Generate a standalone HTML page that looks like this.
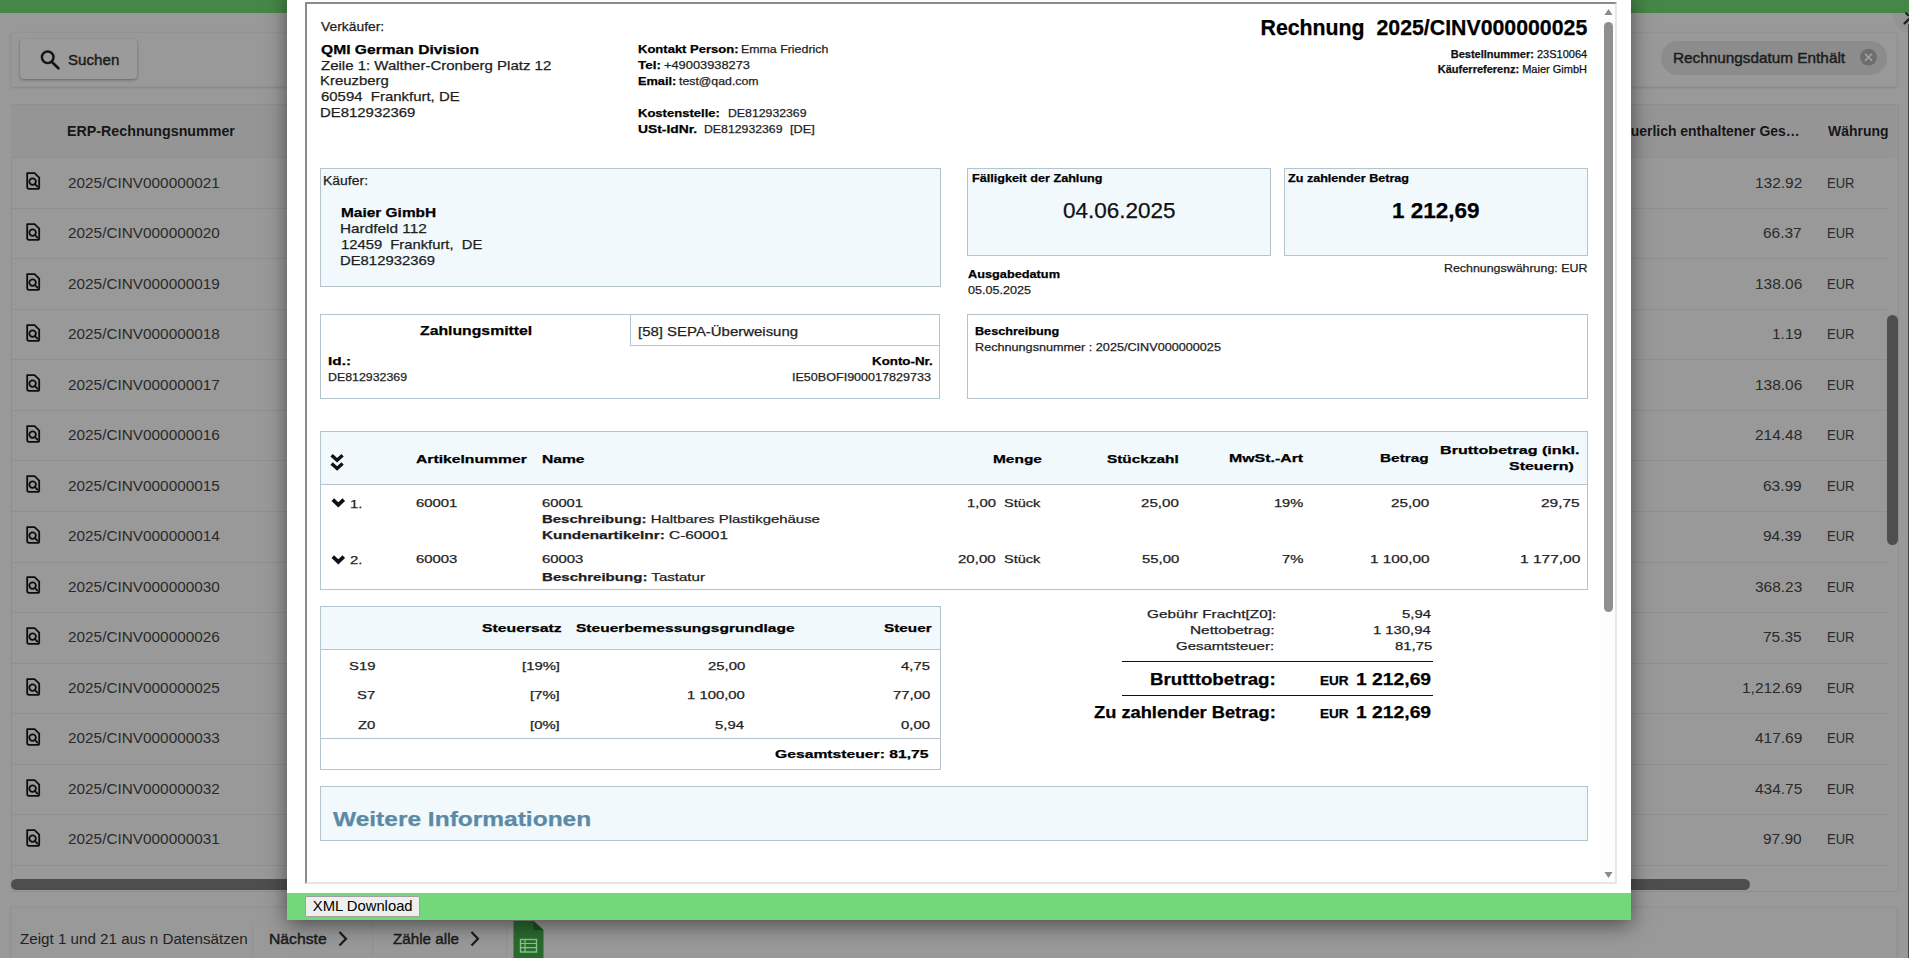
<!DOCTYPE html>
<html><head><meta charset="utf-8"><style>
*{box-sizing:border-box}
html,body{margin:0;padding:0}
body{width:1909px;height:958px;overflow:hidden;position:relative;background:#999;font-family:"Liberation Sans",sans-serif}
.t{position:absolute;white-space:pre;line-height:1;transform-origin:0 0}
.t b{font-weight:bold}
.inv .t{-webkit-text-stroke:0.25px currentColor}
.a{position:absolute}
.rl{position:absolute;left:11px;width:1877px;height:1px;background:#8f8f8f}
.ri{position:absolute;left:24.5px}
.box{position:absolute;border:1px solid #b3c4cc;background:#f1f9fd}
.wbox{position:absolute;border:1px solid #b3c4cc;background:#fff}
.hl{position:absolute;height:1px;background:#b3c4cc}
</style></head><body>
<!-- background page -->
<div class="a" style="left:0;top:0;width:1909px;height:13px;background:#468748"></div>
<div class="a" style="left:10.5px;top:31.5px;width:1886px;height:55px;border:1px solid #939393;box-shadow:0 1px 2px rgba(0,0,0,0.12)"></div>
<div class="a" style="left:19.8px;top:39.3px;width:117px;height:39.7px;border-radius:4px;background:#9b9b9b;box-shadow:0 1px 3px rgba(0,0,0,0.35)"></div>
<svg class="a" style="left:38px;top:48px" width="24" height="24" viewBox="0 0 24 24"><circle cx="9.7" cy="9.3" r="5.8" fill="none" stroke="#141414" stroke-width="2.4"/><path d="M14.2 14.2 L20.4 20.3" stroke="#141414" stroke-width="2.6" stroke-linecap="round"/></svg>
<div class="a" style="left:1661px;top:40.5px;width:225.5px;height:34.5px;border-radius:17.25px;background:#8c8c8c"></div>
<svg class="a" style="left:1858px;top:46.5px" width="21" height="21" viewBox="0 0 21 21"><circle cx="10.5" cy="10.2" r="8.4" fill="#6e6e6e"/><path d="M7 6.7 L14 13.7 M14 6.7 L7 13.7" stroke="#a4a4a4" stroke-width="1.6"/></svg>
<div class="a" style="left:1893px;top:13px;width:40px;height:22px;border-radius:0 0 0 22px;background:#939393"></div>
<div class="a" style="left:10.5px;top:103.5px;width:1888px;height:788px;border:1px solid #8f8f8f"></div>
<div class="a" style="left:11px;top:104.5px;width:1887px;height:52.6px;background:#959596"></div>
<div class="rl" style="top:157.10px"></div>
<div class="rl" style="top:207.65px"></div>
<div class="rl" style="top:258.20px"></div>
<div class="rl" style="top:308.75px"></div>
<div class="rl" style="top:359.30px"></div>
<div class="rl" style="top:409.85px"></div>
<div class="rl" style="top:460.40px"></div>
<div class="rl" style="top:510.95px"></div>
<div class="rl" style="top:561.50px"></div>
<div class="rl" style="top:612.05px"></div>
<div class="rl" style="top:662.60px"></div>
<div class="rl" style="top:713.15px"></div>
<div class="rl" style="top:763.70px"></div>
<div class="rl" style="top:814.25px"></div>
<div class="rl" style="top:864.80px"></div>
<svg class="ri" style="top:172.30px" width="16" height="18" viewBox="0 0 16 18"><path d="M2.2 1.1 H9.6 L14.2 5.6 V15.2 Q14.2 16.9 12.5 16.9 H3.9 Q2.2 16.9 2.2 15.2 Z" fill="none" stroke="#0d0d0d" stroke-width="1.8" stroke-linejoin="round"/><circle cx="7.6" cy="9.6" r="3.3" fill="none" stroke="#0d0d0d" stroke-width="1.8"/><path d="M10 12 L12.4 14.6" stroke="#0d0d0d" stroke-width="1.8" stroke-linecap="round"/></svg>
<svg class="ri" style="top:222.82px" width="16" height="18" viewBox="0 0 16 18"><path d="M2.2 1.1 H9.6 L14.2 5.6 V15.2 Q14.2 16.9 12.5 16.9 H3.9 Q2.2 16.9 2.2 15.2 Z" fill="none" stroke="#0d0d0d" stroke-width="1.8" stroke-linejoin="round"/><circle cx="7.6" cy="9.6" r="3.3" fill="none" stroke="#0d0d0d" stroke-width="1.8"/><path d="M10 12 L12.4 14.6" stroke="#0d0d0d" stroke-width="1.8" stroke-linecap="round"/></svg>
<svg class="ri" style="top:273.34px" width="16" height="18" viewBox="0 0 16 18"><path d="M2.2 1.1 H9.6 L14.2 5.6 V15.2 Q14.2 16.9 12.5 16.9 H3.9 Q2.2 16.9 2.2 15.2 Z" fill="none" stroke="#0d0d0d" stroke-width="1.8" stroke-linejoin="round"/><circle cx="7.6" cy="9.6" r="3.3" fill="none" stroke="#0d0d0d" stroke-width="1.8"/><path d="M10 12 L12.4 14.6" stroke="#0d0d0d" stroke-width="1.8" stroke-linecap="round"/></svg>
<svg class="ri" style="top:323.86px" width="16" height="18" viewBox="0 0 16 18"><path d="M2.2 1.1 H9.6 L14.2 5.6 V15.2 Q14.2 16.9 12.5 16.9 H3.9 Q2.2 16.9 2.2 15.2 Z" fill="none" stroke="#0d0d0d" stroke-width="1.8" stroke-linejoin="round"/><circle cx="7.6" cy="9.6" r="3.3" fill="none" stroke="#0d0d0d" stroke-width="1.8"/><path d="M10 12 L12.4 14.6" stroke="#0d0d0d" stroke-width="1.8" stroke-linecap="round"/></svg>
<svg class="ri" style="top:374.38px" width="16" height="18" viewBox="0 0 16 18"><path d="M2.2 1.1 H9.6 L14.2 5.6 V15.2 Q14.2 16.9 12.5 16.9 H3.9 Q2.2 16.9 2.2 15.2 Z" fill="none" stroke="#0d0d0d" stroke-width="1.8" stroke-linejoin="round"/><circle cx="7.6" cy="9.6" r="3.3" fill="none" stroke="#0d0d0d" stroke-width="1.8"/><path d="M10 12 L12.4 14.6" stroke="#0d0d0d" stroke-width="1.8" stroke-linecap="round"/></svg>
<svg class="ri" style="top:424.90px" width="16" height="18" viewBox="0 0 16 18"><path d="M2.2 1.1 H9.6 L14.2 5.6 V15.2 Q14.2 16.9 12.5 16.9 H3.9 Q2.2 16.9 2.2 15.2 Z" fill="none" stroke="#0d0d0d" stroke-width="1.8" stroke-linejoin="round"/><circle cx="7.6" cy="9.6" r="3.3" fill="none" stroke="#0d0d0d" stroke-width="1.8"/><path d="M10 12 L12.4 14.6" stroke="#0d0d0d" stroke-width="1.8" stroke-linecap="round"/></svg>
<svg class="ri" style="top:475.42px" width="16" height="18" viewBox="0 0 16 18"><path d="M2.2 1.1 H9.6 L14.2 5.6 V15.2 Q14.2 16.9 12.5 16.9 H3.9 Q2.2 16.9 2.2 15.2 Z" fill="none" stroke="#0d0d0d" stroke-width="1.8" stroke-linejoin="round"/><circle cx="7.6" cy="9.6" r="3.3" fill="none" stroke="#0d0d0d" stroke-width="1.8"/><path d="M10 12 L12.4 14.6" stroke="#0d0d0d" stroke-width="1.8" stroke-linecap="round"/></svg>
<svg class="ri" style="top:525.94px" width="16" height="18" viewBox="0 0 16 18"><path d="M2.2 1.1 H9.6 L14.2 5.6 V15.2 Q14.2 16.9 12.5 16.9 H3.9 Q2.2 16.9 2.2 15.2 Z" fill="none" stroke="#0d0d0d" stroke-width="1.8" stroke-linejoin="round"/><circle cx="7.6" cy="9.6" r="3.3" fill="none" stroke="#0d0d0d" stroke-width="1.8"/><path d="M10 12 L12.4 14.6" stroke="#0d0d0d" stroke-width="1.8" stroke-linecap="round"/></svg>
<svg class="ri" style="top:576.46px" width="16" height="18" viewBox="0 0 16 18"><path d="M2.2 1.1 H9.6 L14.2 5.6 V15.2 Q14.2 16.9 12.5 16.9 H3.9 Q2.2 16.9 2.2 15.2 Z" fill="none" stroke="#0d0d0d" stroke-width="1.8" stroke-linejoin="round"/><circle cx="7.6" cy="9.6" r="3.3" fill="none" stroke="#0d0d0d" stroke-width="1.8"/><path d="M10 12 L12.4 14.6" stroke="#0d0d0d" stroke-width="1.8" stroke-linecap="round"/></svg>
<svg class="ri" style="top:626.98px" width="16" height="18" viewBox="0 0 16 18"><path d="M2.2 1.1 H9.6 L14.2 5.6 V15.2 Q14.2 16.9 12.5 16.9 H3.9 Q2.2 16.9 2.2 15.2 Z" fill="none" stroke="#0d0d0d" stroke-width="1.8" stroke-linejoin="round"/><circle cx="7.6" cy="9.6" r="3.3" fill="none" stroke="#0d0d0d" stroke-width="1.8"/><path d="M10 12 L12.4 14.6" stroke="#0d0d0d" stroke-width="1.8" stroke-linecap="round"/></svg>
<svg class="ri" style="top:677.50px" width="16" height="18" viewBox="0 0 16 18"><path d="M2.2 1.1 H9.6 L14.2 5.6 V15.2 Q14.2 16.9 12.5 16.9 H3.9 Q2.2 16.9 2.2 15.2 Z" fill="none" stroke="#0d0d0d" stroke-width="1.8" stroke-linejoin="round"/><circle cx="7.6" cy="9.6" r="3.3" fill="none" stroke="#0d0d0d" stroke-width="1.8"/><path d="M10 12 L12.4 14.6" stroke="#0d0d0d" stroke-width="1.8" stroke-linecap="round"/></svg>
<svg class="ri" style="top:728.02px" width="16" height="18" viewBox="0 0 16 18"><path d="M2.2 1.1 H9.6 L14.2 5.6 V15.2 Q14.2 16.9 12.5 16.9 H3.9 Q2.2 16.9 2.2 15.2 Z" fill="none" stroke="#0d0d0d" stroke-width="1.8" stroke-linejoin="round"/><circle cx="7.6" cy="9.6" r="3.3" fill="none" stroke="#0d0d0d" stroke-width="1.8"/><path d="M10 12 L12.4 14.6" stroke="#0d0d0d" stroke-width="1.8" stroke-linecap="round"/></svg>
<svg class="ri" style="top:778.54px" width="16" height="18" viewBox="0 0 16 18"><path d="M2.2 1.1 H9.6 L14.2 5.6 V15.2 Q14.2 16.9 12.5 16.9 H3.9 Q2.2 16.9 2.2 15.2 Z" fill="none" stroke="#0d0d0d" stroke-width="1.8" stroke-linejoin="round"/><circle cx="7.6" cy="9.6" r="3.3" fill="none" stroke="#0d0d0d" stroke-width="1.8"/><path d="M10 12 L12.4 14.6" stroke="#0d0d0d" stroke-width="1.8" stroke-linecap="round"/></svg>
<svg class="ri" style="top:829.06px" width="16" height="18" viewBox="0 0 16 18"><path d="M2.2 1.1 H9.6 L14.2 5.6 V15.2 Q14.2 16.9 12.5 16.9 H3.9 Q2.2 16.9 2.2 15.2 Z" fill="none" stroke="#0d0d0d" stroke-width="1.8" stroke-linejoin="round"/><circle cx="7.6" cy="9.6" r="3.3" fill="none" stroke="#0d0d0d" stroke-width="1.8"/><path d="M10 12 L12.4 14.6" stroke="#0d0d0d" stroke-width="1.8" stroke-linecap="round"/></svg>
<div class="a" style="left:11px;top:878.8px;width:1739px;height:11.6px;border-radius:6px;background:#4e4e4e"></div>
<div class="a" style="left:1887px;top:315px;width:11px;height:230px;border-radius:6px;background:#4e4e4e"></div>
<div class="a" style="left:1907.8px;top:24px;width:1.2px;height:934px;background:#454545"></div>
<svg class="a" style="left:1900px;top:10px" width="9" height="18" viewBox="0 0 9 18"><path d="M4.6 13.4 L9.5 8.6 M6.2 3.2 L8.2 5.2" stroke="#1e1e1e" stroke-width="2.2" stroke-linecap="round"/></svg>
<div class="a" style="left:11px;top:907px;width:1886px;height:60px;border:1px solid #939393;box-shadow:0 1px 2px rgba(0,0,0,0.12)"></div>
<div class="a" style="left:252px;top:923px;width:121px;height:40px;border-left:1px solid #919191;border-right:1px solid #919191"></div>
<div class="a" style="left:374px;top:923px;width:133px;height:40px;border-right:1px solid #919191"></div>
<svg class="a" style="left:335px;top:929px" width="16" height="20" viewBox="0 0 16 20"><path d="M4.5 3 L11 9.8 L4.5 16.6" fill="none" stroke="#1c1c1c" stroke-width="2.2"/></svg>
<svg class="a" style="left:467px;top:929px" width="16" height="20" viewBox="0 0 16 20"><path d="M4.5 3 L11 9.8 L4.5 16.6" fill="none" stroke="#1c1c1c" stroke-width="2.2"/></svg>
<svg class="a" style="left:512.5px;top:919.5px" width="32" height="40" viewBox="0 0 32 40"><path d="M0.5 1 H20.5 L30.5 10 V40 H0.5 Z" fill="#2b6a2f"/><path d="M20.5 1 V10 H30.5 Z" fill="#1a5020"/><rect x="7.5" y="19.5" width="16" height="12.5" fill="none" stroke="#86c58a" stroke-width="1.4"/><path d="M7.5 23.5 H23.5 M7.5 27.7 H23.5 M12 19.5 V32" stroke="#86c58a" stroke-width="1.2"/></svg>
<div class="t" style="left:67.80px;top:52.28px;font-size:15.5px;color:#1c1c1c;transform:scaleX(0.9759);-webkit-text-stroke:0.45px currentColor">Suchen</div>
<div class="t" style="left:66.65px;top:122.80px;font-size:15px;color:#161616;transform:scaleX(0.9502);font-weight:bold">ERP-Rechnungsnummer</div>
<div class="t" style="left:1609.32px;top:122.80px;font-size:15px;color:#161616;transform:scaleX(0.9300);font-weight:bold">Steuerlich enthaltener Ges…</div>
<div class="t" style="left:1827.50px;top:122.80px;font-size:15px;color:#161616;transform:scaleX(0.9302);font-weight:bold">Währung</div>
<div class="t" style="left:1672.78px;top:49.60px;font-size:15px;color:#1c1c1c;transform:scaleX(1.0215);-webkit-text-stroke:0.45px currentColor">Rechnungsdatum Enthält</div>
<div class="t" style="left:20.20px;top:931.08px;font-size:15.5px;color:#222;transform:scaleX(0.9783)">Zeigt 1 und 21 aus n Datensätzen</div>
<div class="t" style="left:269.18px;top:931.28px;font-size:15.5px;color:#1c1c1c;transform:scaleX(1.0156);-webkit-text-stroke:0.45px currentColor">Nächste</div>
<div class="t" style="left:392.50px;top:931.28px;font-size:15.5px;color:#1c1c1c;transform:scaleX(0.9822);-webkit-text-stroke:0.45px currentColor">Zähle alle</div>
<div class="t" style="left:67.60px;top:174.50px;font-size:15px;color:#2a2a2a;transform:scaleX(1.0229)">2025/CINV000000021</div>
<div class="t" style="left:1754.80px;top:174.50px;font-size:15px;color:#2a2a2a;transform:scaleX(1.0300)">132.92</div>
<div class="t" style="left:1826.63px;top:174.50px;font-size:15px;color:#2a2a2a;transform:scaleX(0.8658)">EUR</div>
<div class="t" style="left:67.60px;top:225.02px;font-size:15px;color:#2a2a2a;transform:scaleX(1.0229)">2025/CINV000000020</div>
<div class="t" style="left:1763.39px;top:225.02px;font-size:15px;color:#2a2a2a;transform:scaleX(1.0300)">66.37</div>
<div class="t" style="left:1826.63px;top:225.02px;font-size:15px;color:#2a2a2a;transform:scaleX(0.8658)">EUR</div>
<div class="t" style="left:67.60px;top:275.54px;font-size:15px;color:#2a2a2a;transform:scaleX(1.0229)">2025/CINV000000019</div>
<div class="t" style="left:1754.80px;top:275.54px;font-size:15px;color:#2a2a2a;transform:scaleX(1.0300)">138.06</div>
<div class="t" style="left:1826.63px;top:275.54px;font-size:15px;color:#2a2a2a;transform:scaleX(0.8658)">EUR</div>
<div class="t" style="left:67.60px;top:326.06px;font-size:15px;color:#2a2a2a;transform:scaleX(1.0229)">2025/CINV000000018</div>
<div class="t" style="left:1771.98px;top:326.06px;font-size:15px;color:#2a2a2a;transform:scaleX(1.0300)">1.19</div>
<div class="t" style="left:1826.63px;top:326.06px;font-size:15px;color:#2a2a2a;transform:scaleX(0.8658)">EUR</div>
<div class="t" style="left:67.60px;top:376.58px;font-size:15px;color:#2a2a2a;transform:scaleX(1.0229)">2025/CINV000000017</div>
<div class="t" style="left:1754.80px;top:376.58px;font-size:15px;color:#2a2a2a;transform:scaleX(1.0300)">138.06</div>
<div class="t" style="left:1826.63px;top:376.58px;font-size:15px;color:#2a2a2a;transform:scaleX(0.8658)">EUR</div>
<div class="t" style="left:67.60px;top:427.10px;font-size:15px;color:#2a2a2a;transform:scaleX(1.0229)">2025/CINV000000016</div>
<div class="t" style="left:1754.80px;top:427.10px;font-size:15px;color:#2a2a2a;transform:scaleX(1.0300)">214.48</div>
<div class="t" style="left:1826.63px;top:427.10px;font-size:15px;color:#2a2a2a;transform:scaleX(0.8658)">EUR</div>
<div class="t" style="left:67.60px;top:477.62px;font-size:15px;color:#2a2a2a;transform:scaleX(1.0229)">2025/CINV000000015</div>
<div class="t" style="left:1763.39px;top:477.62px;font-size:15px;color:#2a2a2a;transform:scaleX(1.0300)">63.99</div>
<div class="t" style="left:1826.63px;top:477.62px;font-size:15px;color:#2a2a2a;transform:scaleX(0.8658)">EUR</div>
<div class="t" style="left:67.60px;top:528.14px;font-size:15px;color:#2a2a2a;transform:scaleX(1.0229)">2025/CINV000000014</div>
<div class="t" style="left:1763.39px;top:528.14px;font-size:15px;color:#2a2a2a;transform:scaleX(1.0300)">94.39</div>
<div class="t" style="left:1826.63px;top:528.14px;font-size:15px;color:#2a2a2a;transform:scaleX(0.8658)">EUR</div>
<div class="t" style="left:67.60px;top:578.66px;font-size:15px;color:#2a2a2a;transform:scaleX(1.0229)">2025/CINV000000030</div>
<div class="t" style="left:1754.80px;top:578.66px;font-size:15px;color:#2a2a2a;transform:scaleX(1.0300)">368.23</div>
<div class="t" style="left:1826.63px;top:578.66px;font-size:15px;color:#2a2a2a;transform:scaleX(0.8658)">EUR</div>
<div class="t" style="left:67.60px;top:629.18px;font-size:15px;color:#2a2a2a;transform:scaleX(1.0229)">2025/CINV000000026</div>
<div class="t" style="left:1763.39px;top:629.18px;font-size:15px;color:#2a2a2a;transform:scaleX(1.0300)">75.35</div>
<div class="t" style="left:1826.63px;top:629.18px;font-size:15px;color:#2a2a2a;transform:scaleX(0.8658)">EUR</div>
<div class="t" style="left:67.60px;top:679.70px;font-size:15px;color:#2a2a2a;transform:scaleX(1.0229)">2025/CINV000000025</div>
<div class="t" style="left:1741.91px;top:679.70px;font-size:15px;color:#2a2a2a;transform:scaleX(1.0300)">1,212.69</div>
<div class="t" style="left:1826.63px;top:679.70px;font-size:15px;color:#2a2a2a;transform:scaleX(0.8658)">EUR</div>
<div class="t" style="left:67.60px;top:730.22px;font-size:15px;color:#2a2a2a;transform:scaleX(1.0229)">2025/CINV000000033</div>
<div class="t" style="left:1754.80px;top:730.22px;font-size:15px;color:#2a2a2a;transform:scaleX(1.0300)">417.69</div>
<div class="t" style="left:1826.63px;top:730.22px;font-size:15px;color:#2a2a2a;transform:scaleX(0.8658)">EUR</div>
<div class="t" style="left:67.60px;top:780.74px;font-size:15px;color:#2a2a2a;transform:scaleX(1.0229)">2025/CINV000000032</div>
<div class="t" style="left:1754.80px;top:780.74px;font-size:15px;color:#2a2a2a;transform:scaleX(1.0300)">434.75</div>
<div class="t" style="left:1826.63px;top:780.74px;font-size:15px;color:#2a2a2a;transform:scaleX(0.8658)">EUR</div>
<div class="t" style="left:67.60px;top:831.26px;font-size:15px;color:#2a2a2a;transform:scaleX(1.0229)">2025/CINV000000031</div>
<div class="t" style="left:1763.39px;top:831.26px;font-size:15px;color:#2a2a2a;transform:scaleX(1.0300)">97.90</div>
<div class="t" style="left:1826.63px;top:831.26px;font-size:15px;color:#2a2a2a;transform:scaleX(0.8658)">EUR</div>
<!-- modal -->
<div class="a" style="left:287px;top:-10px;width:1344px;height:930px;background:#fff;box-shadow:0 5px 20px rgba(0,0,0,0.5)"></div>
<div class="a" style="left:305px;top:2px;width:1312px;height:882px;border-style:solid;border-width:2px;border-color:#8c8c8c #e6e6e6 #e6e6e6 #8c8c8c"></div>
<div class="a" style="left:1600px;top:4px;width:15px;height:878px;background:#fdfdfd"></div>
<div class="a" style="left:1604px;top:22px;width:9px;height:590px;border-radius:5px;background:#8f8f8f"></div>
<svg class="a" style="left:1603px;top:7px" width="11" height="10" viewBox="0 0 11 10"><path d="M5.5 2 L9.5 8 H1.5 Z" fill="#8a8a8a"/></svg>
<svg class="a" style="left:1603px;top:870px" width="11" height="10" viewBox="0 0 11 10"><path d="M5.5 8 L9.5 2 H1.5 Z" fill="#8a8a8a"/></svg>
<!-- invoice boxes -->
<div class="box" style="left:320px;top:168px;width:621px;height:119px"></div>
<div class="box" style="left:967px;top:168px;width:304px;height:88px"></div>
<div class="box" style="left:1284px;top:168px;width:304px;height:88px"></div>
<div class="wbox" style="left:320px;top:314px;width:620px;height:85px"></div>
<div class="a" style="left:630px;top:314px;width:310px;height:32px;border-left:1px solid #b3c4cc;border-bottom:1px solid #b3c4cc"></div>
<div class="wbox" style="left:967px;top:314px;width:621px;height:85px"></div>
<div class="wbox" style="left:320px;top:431px;width:1268px;height:159px"></div>
<div class="a" style="left:321px;top:432px;width:1266px;height:53px;background:#f1f9fd;border-bottom:1px solid #b3c4cc"></div>
<div class="wbox" style="left:320px;top:606px;width:621px;height:164px"></div>
<div class="a" style="left:321px;top:607px;width:619px;height:43px;background:#f1f9fd;border-bottom:1px solid #b3c4cc"></div>
<div class="hl" style="left:321px;top:738px;width:619px"></div>
<div class="a" style="left:1122px;top:661px;width:311px;height:1.2px;background:#111"></div>
<div class="a" style="left:1122px;top:695px;width:311px;height:1.2px;background:#111"></div>
<div class="box" style="left:320px;top:786px;width:1268px;height:55px"></div>
<svg class="a" style="left:329px;top:451.5px" width="17" height="22" viewBox="0 0 17 22"><path d="M2.6 3.2 L8.1 8.2 L13.6 3.2 M2.6 11.4 L8.1 16.4 L13.6 11.4" fill="none" stroke="#111" stroke-width="3.4"/></svg>
<svg class="a" style="left:330px;top:496px" width="16" height="13" viewBox="0 0 16 13"><path d="M2.8 3.6 L8.3 8.9 L13.8 3.6" fill="none" stroke="#111" stroke-width="3.7"/></svg>
<svg class="a" style="left:330px;top:553px" width="16" height="13" viewBox="0 0 16 13"><path d="M2.8 3.6 L8.3 8.9 L13.8 3.6" fill="none" stroke="#111" stroke-width="3.7"/></svg>
<div class="inv"><div class="t" style="left:321.00px;top:20.20px;font-size:13px;color:#1e1e1e;transform:scaleX(1.0658)">Verkäufer:</div>
<div class="t" style="left:321.00px;top:42.60px;font-size:13px;color:#000;transform:scaleX(1.2012);font-weight:bold">QMI German Division</div>
<div class="t" style="left:321.00px;top:58.50px;font-size:13px;color:#1e1e1e;transform:scaleX(1.1533)">Zeile 1: Walther-Cronberg Platz 12</div>
<div class="t" style="left:319.85px;top:74.30px;font-size:13px;color:#1e1e1e;transform:scaleX(1.1456)">Kreuzberg</div>
<div class="t" style="left:321.00px;top:90.30px;font-size:13px;color:#1e1e1e;transform:scaleX(1.1488)">60594  Frankfurt, DE</div>
<div class="t" style="left:319.85px;top:106.20px;font-size:13px;color:#1e1e1e;transform:scaleX(1.1478)">DE812932369</div>
<div class="t" style="left:637.70px;top:43.87px;font-size:11.5px;color:#000;transform:scaleX(1.1320);font-weight:bold">Kontakt Person:</div>
<div class="t" style="left:740.60px;top:43.87px;font-size:11.5px;color:#1e1e1e;transform:scaleX(1.0761)">Emma Friedrich</div>
<div class="t" style="left:637.60px;top:59.87px;font-size:11.5px;color:#000;transform:scaleX(1.1673);font-weight:bold">Tel:</div>
<div class="t" style="left:663.90px;top:59.87px;font-size:11.5px;color:#1e1e1e;transform:scaleX(1.1151)">+49003938273</div>
<div class="t" style="left:637.70px;top:75.87px;font-size:11.5px;color:#000;transform:scaleX(1.1104);font-weight:bold">Email:</div>
<div class="t" style="left:679.00px;top:75.87px;font-size:11.5px;color:#1e1e1e;transform:scaleX(1.0714)">test@qad.com</div>
<div class="t" style="left:637.70px;top:107.67px;font-size:11.5px;color:#000;transform:scaleX(1.1333);font-weight:bold">Kostenstelle:</div>
<div class="t" style="left:727.90px;top:107.67px;font-size:11.5px;color:#1e1e1e;transform:scaleX(1.0678)">DE812932369</div>
<div class="t" style="left:637.70px;top:123.57px;font-size:11.5px;color:#000;transform:scaleX(1.2020);font-weight:bold">USt-IdNr.</div>
<div class="t" style="left:703.70px;top:123.57px;font-size:11.5px;color:#1e1e1e;transform:scaleX(1.0678)">DE812932369</div>
<div class="t" style="left:789.50px;top:123.57px;font-size:11.5px;color:#1e1e1e;transform:scaleX(1.1051)">[DE]</div>
<div class="t" style="left:1260.52px;top:17.67px;font-size:21.3px;color:#000;font-weight:bold">Rechnung  2025/CINV000000025</div>
<div class="t" style="left:1450.77px;top:48.89px;font-size:11px;color:#111"><b>Bestellnummer:</b> 23S10064</div>
<div class="t" style="left:1437.80px;top:64.09px;font-size:11px;color:#111"><b>Käuferreferenz:</b> Maier GimbH</div>
<div class="t" style="left:323.48px;top:174.52px;font-size:12.5px;color:#1e1e1e;transform:scaleX(1.1177)">Käufer:</div>
<div class="t" style="left:340.70px;top:206.00px;font-size:13px;color:#000;transform:scaleX(1.1868);font-weight:bold">Maier GimbH</div>
<div class="t" style="left:339.52px;top:222.00px;font-size:13px;color:#1e1e1e;transform:scaleX(1.1807)">Hardfeld 112</div>
<div class="t" style="left:340.70px;top:238.00px;font-size:13px;color:#1e1e1e;transform:scaleX(1.1371)">12459  Frankfurt,  DE</div>
<div class="t" style="left:339.56px;top:254.00px;font-size:13px;color:#1e1e1e;transform:scaleX(1.1417)">DE812932369</div>
<div class="t" style="left:971.50px;top:172.87px;font-size:11.5px;color:#000;transform:scaleX(1.0983);font-weight:bold">Fälligkeit der Zahlung</div>
<div class="t" style="left:1063.00px;top:199.75px;font-size:22.5px;color:#111">04.06.2025</div>
<div class="t" style="left:1288.30px;top:172.67px;font-size:11.5px;color:#000;transform:scaleX(1.0948);font-weight:bold">Zu zahlender Betrag</div>
<div class="t" style="left:1392.00px;top:199.95px;font-size:22.5px;color:#000;font-weight:bold">1 212,69</div>
<div class="t" style="left:1443.80px;top:263.07px;font-size:11.5px;color:#1e1e1e;transform:scaleX(1.0780)">Rechnungswährung: EUR</div>
<div class="t" style="left:968.30px;top:269.47px;font-size:11.5px;color:#000;transform:scaleX(1.1069);font-weight:bold">Ausgabedatum</div>
<div class="t" style="left:968.30px;top:285.07px;font-size:11.5px;color:#1e1e1e;transform:scaleX(1.0969)">05.05.2025</div>
<div class="t" style="left:419.80px;top:324.30px;font-size:13px;color:#000;transform:scaleX(1.2141);font-weight:bold">Zahlungsmittel</div>
<div class="t" style="left:638.20px;top:324.80px;font-size:13px;color:#1e1e1e;transform:scaleX(1.1497)">[58] SEPA-Überweisung</div>
<div class="t" style="left:328.20px;top:356.07px;font-size:11.5px;color:#000;transform:scaleX(1.3342);font-weight:bold">Id.:</div>
<div class="t" style="left:328.20px;top:372.17px;font-size:11.5px;color:#1e1e1e;transform:scaleX(1.0746)">DE812932369</div>
<div class="t" style="left:872.00px;top:356.07px;font-size:11.5px;color:#000;transform:scaleX(1.1594);font-weight:bold">Konto-Nr.</div>
<div class="t" style="left:791.81px;top:372.17px;font-size:11.5px;color:#1e1e1e;transform:scaleX(1.0918)">IE50BOFI900017829733</div>
<div class="t" style="left:975.40px;top:325.57px;font-size:11.5px;color:#000;transform:scaleX(1.0984);font-weight:bold">Beschreibung</div>
<div class="t" style="left:975.40px;top:341.57px;font-size:11.5px;color:#1e1e1e;transform:scaleX(1.0991)">Rechnungsnummer : 2025/CINV000000025</div>
<div class="t" style="left:416.40px;top:453.67px;font-size:11.5px;color:#000;transform:scaleX(1.3650);font-weight:bold">Artikelnummer</div>
<div class="t" style="left:541.60px;top:453.67px;font-size:11.5px;color:#000;transform:scaleX(1.3581);font-weight:bold">Name</div>
<div class="t" style="left:992.60px;top:453.67px;font-size:11.5px;color:#000;transform:scaleX(1.3435);font-weight:bold">Menge</div>
<div class="t" style="left:1107.00px;top:453.67px;font-size:11.5px;color:#000;transform:scaleX(1.3368);font-weight:bold">Stückzahl</div>
<div class="t" style="left:1229.30px;top:453.47px;font-size:11.5px;color:#000;transform:scaleX(1.3821);font-weight:bold">MwSt.-Art</div>
<div class="t" style="left:1380.20px;top:453.47px;font-size:11.5px;color:#000;transform:scaleX(1.3351);font-weight:bold">Betrag</div>
<div class="t" style="left:1440.00px;top:445.37px;font-size:11.5px;color:#000;transform:scaleX(1.4004);font-weight:bold">Bruttobetrag (inkl.</div>
<div class="t" style="left:1509.00px;top:461.17px;font-size:11.5px;color:#000;transform:scaleX(1.3884);font-weight:bold">Steuern)</div>
<div class="t" style="left:349.70px;top:498.57px;font-size:11.5px;color:#1e1e1e;transform:scaleX(1.2917)">1.</div>
<div class="t" style="left:416.40px;top:497.57px;font-size:11.5px;color:#1e1e1e;transform:scaleX(1.2918)">60001</div>
<div class="t" style="left:541.60px;top:497.57px;font-size:11.5px;color:#1e1e1e;transform:scaleX(1.2823)">60001</div>
<div class="t" style="left:541.60px;top:514.07px;font-size:11.5px;color:#1e1e1e;transform:scaleX(1.2980)"><b>Beschreibung:</b> Haltbares Plastikgehäuse</div>
<div class="t" style="left:541.60px;top:530.47px;font-size:11.5px;color:#1e1e1e;transform:scaleX(1.3345)"><b>Kundenartikelnr:</b> C-60001</div>
<div class="t" style="left:966.70px;top:497.57px;font-size:11.5px;color:#1e1e1e;transform:scaleX(1.2917)">1,00</div>
<div class="t" style="left:1004.30px;top:497.57px;font-size:11.5px;color:#1e1e1e;transform:scaleX(1.2650)">Stück</div>
<div class="t" style="left:1141.20px;top:497.57px;font-size:11.5px;color:#1e1e1e;transform:scaleX(1.3142)">25,00</div>
<div class="t" style="left:1274.40px;top:497.57px;font-size:11.5px;color:#1e1e1e;transform:scaleX(1.2680)">19%</div>
<div class="t" style="left:1391.10px;top:497.57px;font-size:11.5px;color:#1e1e1e;transform:scaleX(1.3283)">25,00</div>
<div class="t" style="left:1541.10px;top:497.57px;font-size:11.5px;color:#1e1e1e;transform:scaleX(1.3459)">29,75</div>
<div class="t" style="left:349.70px;top:555.47px;font-size:11.5px;color:#1e1e1e;transform:scaleX(1.2917)">2.</div>
<div class="t" style="left:416.40px;top:554.47px;font-size:11.5px;color:#1e1e1e;transform:scaleX(1.2917)">60003</div>
<div class="t" style="left:541.60px;top:554.47px;font-size:11.5px;color:#1e1e1e;transform:scaleX(1.2917)">60003</div>
<div class="t" style="left:541.60px;top:571.87px;font-size:11.5px;color:#1e1e1e;transform:scaleX(1.3095)"><b>Beschreibung:</b> Tastatur</div>
<div class="t" style="left:958.00px;top:554.47px;font-size:11.5px;color:#1e1e1e;transform:scaleX(1.3072)">20,00</div>
<div class="t" style="left:1004.30px;top:554.47px;font-size:11.5px;color:#1e1e1e;transform:scaleX(1.2650)">Stück</div>
<div class="t" style="left:1141.84px;top:554.47px;font-size:11.5px;color:#1e1e1e;transform:scaleX(1.2917)">55,00</div>
<div class="t" style="left:1282.12px;top:554.47px;font-size:11.5px;color:#1e1e1e;transform:scaleX(1.2917)">7%</div>
<div class="t" style="left:1369.70px;top:554.47px;font-size:11.5px;color:#1e1e1e;transform:scaleX(1.3320)">1 100,00</div>
<div class="t" style="left:1519.50px;top:554.47px;font-size:11.5px;color:#1e1e1e;transform:scaleX(1.3478)">1 177,00</div>
<div class="t" style="left:481.60px;top:623.17px;font-size:11.5px;color:#000;transform:scaleX(1.3696);font-weight:bold">Steuersatz</div>
<div class="t" style="left:575.80px;top:623.17px;font-size:11.5px;color:#000;transform:scaleX(1.3517);font-weight:bold">Steuerbemessungsgrundlage</div>
<div class="t" style="left:883.90px;top:623.17px;font-size:11.5px;color:#000;transform:scaleX(1.3327);font-weight:bold">Steuer</div>
<div class="t" style="left:348.98px;top:660.57px;font-size:11.5px;color:#1e1e1e;transform:scaleX(1.2917)">S19</div>
<div class="t" style="left:521.67px;top:660.57px;font-size:11.5px;color:#1e1e1e;transform:scaleX(1.2917)">[19%]</div>
<div class="t" style="left:707.54px;top:660.57px;font-size:11.5px;color:#1e1e1e;transform:scaleX(1.2917)">25,00</div>
<div class="t" style="left:901.10px;top:660.57px;font-size:11.5px;color:#1e1e1e;transform:scaleX(1.2917)">4,75</div>
<div class="t" style="left:357.24px;top:689.77px;font-size:11.5px;color:#1e1e1e;transform:scaleX(1.2917)">S7</div>
<div class="t" style="left:529.93px;top:689.77px;font-size:11.5px;color:#1e1e1e;transform:scaleX(1.2917)">[7%]</div>
<div class="t" style="left:686.89px;top:689.77px;font-size:11.5px;color:#1e1e1e;transform:scaleX(1.2917)">1 100,00</div>
<div class="t" style="left:892.84px;top:689.77px;font-size:11.5px;color:#1e1e1e;transform:scaleX(1.2917)">77,00</div>
<div class="t" style="left:358.08px;top:719.57px;font-size:11.5px;color:#1e1e1e;transform:scaleX(1.2917)">Z0</div>
<div class="t" style="left:529.93px;top:719.57px;font-size:11.5px;color:#1e1e1e;transform:scaleX(1.2917)">[0%]</div>
<div class="t" style="left:714.51px;top:719.57px;font-size:11.5px;color:#1e1e1e;transform:scaleX(1.2917)">5,94</div>
<div class="t" style="left:901.10px;top:719.57px;font-size:11.5px;color:#1e1e1e;transform:scaleX(1.2917)">0,00</div>
<div class="t" style="left:775.20px;top:748.77px;font-size:11.5px;color:#000;transform:scaleX(1.3641);font-weight:bold">Gesamtsteuer: 81,75</div>
<div class="t" style="left:1146.90px;top:609.27px;font-size:11.5px;color:#1e1e1e;transform:scaleX(1.3295)">Gebühr Fracht[Z0]:</div>
<div class="t" style="left:1401.51px;top:609.27px;font-size:11.5px;color:#1e1e1e;transform:scaleX(1.2917)">5,94</div>
<div class="t" style="left:1189.50px;top:625.17px;font-size:11.5px;color:#1e1e1e;transform:scaleX(1.3361)">Nettobetrag:</div>
<div class="t" style="left:1372.70px;top:625.17px;font-size:11.5px;color:#1e1e1e;transform:scaleX(1.2894)">1 130,94</div>
<div class="t" style="left:1176.00px;top:641.07px;font-size:11.5px;color:#1e1e1e;transform:scaleX(1.3001)">Gesamtsteuer:</div>
<div class="t" style="left:1394.54px;top:641.07px;font-size:11.5px;color:#1e1e1e;transform:scaleX(1.2917)">81,75</div>
<div class="t" style="left:1149.63px;top:671.76px;font-size:16px;color:#000;transform:scaleX(1.1691);font-weight:bold">Brutttobetrag:</div>
<div class="t" style="left:1320.40px;top:675.14px;font-size:12px;color:#000;transform:scaleX(1.1297);font-weight:bold">EUR</div>
<div class="t" style="left:1355.99px;top:671.76px;font-size:16px;color:#000;transform:scaleX(1.2055);font-weight:bold">1 212,69</div>
<div class="t" style="left:1093.60px;top:705.06px;font-size:16px;color:#000;transform:scaleX(1.1419);font-weight:bold">Zu zahlender Betrag:</div>
<div class="t" style="left:1320.40px;top:708.44px;font-size:12px;color:#000;transform:scaleX(1.1297);font-weight:bold">EUR</div>
<div class="t" style="left:1355.99px;top:705.06px;font-size:16px;color:#000;transform:scaleX(1.2055);font-weight:bold">1 212,69</div>
<div class="t" style="left:333.30px;top:808.57px;font-size:20px;color:#5c8aa4;transform:scaleX(1.2250);font-weight:bold">Weitere Informationen</div></div>
<!-- footer bar -->
<div class="a" style="left:287px;top:893px;width:1344px;height:27px;background:#72d87a"></div>
<div class="a" style="left:305.4px;top:896.3px;width:115px;height:20.5px;background:#efefef;border:1px solid #a0a0a0;border-radius:1px"></div>
<div class="t" style="left:312.8px;top:898.8px;font-size:14.8px;color:#000">XML Download</div>
</body></html>
